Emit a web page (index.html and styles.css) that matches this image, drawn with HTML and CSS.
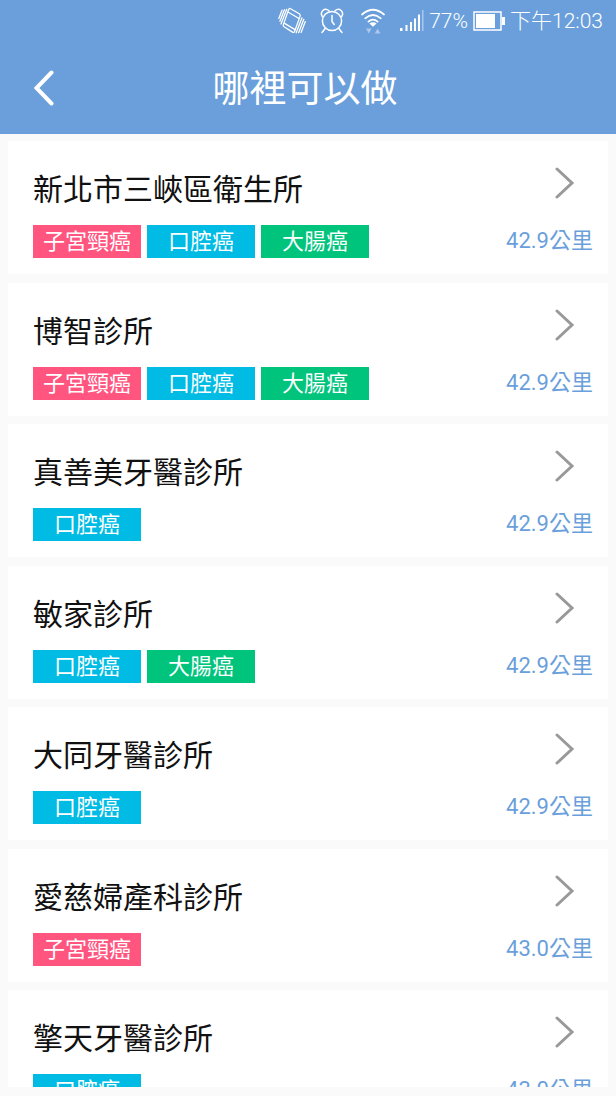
FILE: index.html
```html
<!DOCTYPE html>
<html lang="zh-Hant">
<head>
    <meta charset="UTF-8">
    <meta name="viewport" content="width=device-width, initial-scale=1.0">
    <title>哪裡可以做</title>
    <link rel="stylesheet" href="styles.css">
</head>
<body>
    <header class="top">
        <div class="status-bar">
            <svg class="icon-vibrate" width="28" height="28" viewBox="0 0 28 28">
                <g fill="none" stroke="#fff" stroke-width="1.3" stroke-linecap="round" stroke-linejoin="round">
                    <path d="M12.500 1.700L21.300 6.800q1.400.9.800 2.300L16.600 24.500q-.7 1.500-2.100.6L6 19.800q-1.200-.8-.6-2.200L10.600 2.500q.6-1.500 1.900-.8z"/>
                    <path d="M10.400 5.200l10.600 6.300M6.600 16.400l10.400 6.200"/>
                    <path d="M4 3.200L.8 11.500M6.400 2.700L1.900 14.200M8.700 2.300L3 16.900M24 10.800l-5.800 15M25.800 12.300l-5.200 13.400M27.300 14.600l-4.200 10.800"/>
                </g>
            </svg>
            <svg class="icon-alarm" width="24" height="26" viewBox="0 0 24 26">
                <g fill="none" stroke="#fff" stroke-width="1.5" stroke-linecap="round" stroke-linejoin="round">
                    <circle cx="12" cy="13" r="9.600"/>
                    <path d="M12 7.500v6l2.200 3M5.200 20.500L2 24.500M18.800 20.500l3.200 4"/>
                    <path d="M2.300 8.500C-.5 4 4.500-1 9 2.800M21.700 8.500C24.500 4 19.500-1 15 2.800"/>
                </g>
            </svg>
            <svg class="icon-wifi" width="24" height="26" viewBox="0 0 24 26">
                <g fill="none" stroke="#fff" stroke-width="1.700" stroke-linecap="round">
                    <path d="M1 6.500q11-9.500 22 0M4.200 10.300q7.800-6.600 15.600 0M7.400 13.600q4.600-3.800 9.200 0"/>
                </g>
                <path d="M12 18.800l-3.600-3.300q3.600-2.600 7.200 0z" fill="#fff"/>
                <path d="M5 20.500h5.600L7.800 25.500zM13.800 25.500h5.600l-2.800-5z" fill="#a9c8ec"/>
            </svg>
            <svg class="icon-signal" width="24" height="22" viewBox="0 0 24 22">
                <path d="M0 18h2.500v3H0zM5.500 15h2v6h-2zM10 12h2v9h-2zM14 8.500h2V21h-2zM18 4.500h2V21h-2z" fill="#fff"/>
                <path d="M22 0h1.500v21H22z" fill="#a9c8ec"/>
            </svg>
            <span class="percent">77%</span>
            <svg class="icon-battery" width="32" height="20" viewBox="0 0 32 20">
                <path d="M1 1h27v18H1z" fill="none" stroke="#fff" stroke-width="1.500"/>
                <path d="M3 3h19v14H3zM29 6h3v8h-3z" fill="#fff"/>
            </svg>
            <span class="time">下午12:03</span>
        </div>
        <div class="title-bar">
            <button type="button" class="back" aria-label="返回">
                <svg width="20" height="36" viewBox="0 0 20 36">
                    <path d="M17.500 2.500L2.500 18l15 15.500" fill="none" stroke="#fff" stroke-width="4" stroke-linecap="round"/>
                </svg>
            </button>
            <h1>哪裡可以做</h1>
        </div>
    </header>

    <main class="list">
        <a class="card" href="#">
            <div class="info">
                <h2>新北市三峽區衛生所</h2>
                <div class="tags">
                    <span class="tag pink">子宮頸癌</span>
                    <span class="tag blue">口腔癌</span>
                    <span class="tag green">大腸癌</span>
                </div>
            </div>
            <div class="side">
                <svg class="arrow" width="20" height="32" viewBox="0 0 20 32"><path d="M2 2l15 14L2 30"/></svg>
                <span class="distance">42.9公里</span>
            </div>
        </a>
        <a class="card" href="#">
            <div class="info">
                <h2>博智診所</h2>
                <div class="tags">
                    <span class="tag pink">子宮頸癌</span>
                    <span class="tag blue">口腔癌</span>
                    <span class="tag green">大腸癌</span>
                </div>
            </div>
            <div class="side">
                <svg class="arrow" width="20" height="32" viewBox="0 0 20 32"><path d="M2 2l15 14L2 30"/></svg>
                <span class="distance">42.9公里</span>
            </div>
        </a>
        <a class="card" href="#">
            <div class="info">
                <h2>真善美牙醫診所</h2>
                <div class="tags">
                    <span class="tag blue">口腔癌</span>
                </div>
            </div>
            <div class="side">
                <svg class="arrow" width="20" height="32" viewBox="0 0 20 32"><path d="M2 2l15 14L2 30"/></svg>
                <span class="distance">42.9公里</span>
            </div>
        </a>
        <a class="card" href="#">
            <div class="info">
                <h2>敏家診所</h2>
                <div class="tags">
                    <span class="tag blue">口腔癌</span>
                    <span class="tag green">大腸癌</span>
                </div>
            </div>
            <div class="side">
                <svg class="arrow" width="20" height="32" viewBox="0 0 20 32"><path d="M2 2l15 14L2 30"/></svg>
                <span class="distance">42.9公里</span>
            </div>
        </a>
        <a class="card" href="#">
            <div class="info">
                <h2>大同牙醫診所</h2>
                <div class="tags">
                    <span class="tag blue">口腔癌</span>
                </div>
            </div>
            <div class="side">
                <svg class="arrow" width="20" height="32" viewBox="0 0 20 32"><path d="M2 2l15 14L2 30"/></svg>
                <span class="distance">42.9公里</span>
            </div>
        </a>
        <a class="card" href="#">
            <div class="info">
                <h2>愛慈婦產科診所</h2>
                <div class="tags">
                    <span class="tag pink">子宮頸癌</span>
                </div>
            </div>
            <div class="side">
                <svg class="arrow" width="20" height="32" viewBox="0 0 20 32"><path d="M2 2l15 14L2 30"/></svg>
                <span class="distance">43.0公里</span>
            </div>
        </a>
        <a class="card" href="#">
            <div class="info">
                <h2>擎天牙醫診所</h2>
                <div class="tags">
                    <span class="tag blue">口腔癌</span>
                </div>
            </div>
            <div class="side">
                <svg class="arrow" width="20" height="32" viewBox="0 0 20 32"><path d="M2 2l15 14L2 30"/></svg>
                <span class="distance">43.0公里</span>
            </div>
        </a>
    </main>
</body>
</html>
```

FILE: styles.css
```css
* {
    box-sizing: border-box;
}
body {
    display: flex;
    flex-direction: column;
    height: 100vh;
    margin: 0;
    padding-bottom: 9px;
    background-color: #fafafa;
    font-family: Roboto, 'Noto Sans CJK TC', sans-serif;
}
h1, h2 {
    margin: 0;
    font-weight: 400;
}
.top {
    flex: none;
    background-color: #6a9fdb;
    color: #fff;
}
.status-bar {
    display: flex;
    justify-content: flex-end;
    align-items: center;
    height: 42px;
    padding-right: 13px;
    font-size: 21px;
    font-weight: 300;
    line-height: 42px;
}
.icon-vibrate {
    margin-right: 14px;
}
.icon-alarm {
    margin-right: 17px;
}
.icon-wifi {
    margin-right: 15px;
}
.icon-signal,
.percent,
.icon-battery {
    margin-right: 5px;
}
.title-bar {
    display: grid;
    grid-template-columns: 60px 1fr 66px;
    align-items: center;
    height: 92px;
}
.title-bar h1 {
    padding-top: 4px;
    font-size: 37px;
    line-height: 88px;
    text-align: center;
}
.back {
    display: flex;
    justify-content: flex-end;
    padding: 0 6px 0 0;
    border: none;
    background: none;
    cursor: pointer;
}
.list {
    flex: 1;
    min-height: 0;
    margin: 7px 8px 0;
    overflow-y: auto;
    scrollbar-width: none;
}
.card {
    display: flex;
    justify-content: space-between;
    height: 133px;
    margin-top: 9px;
    padding: 26px 15px 15px 25px;
    background-color: #fff;
    color: #111;
    text-decoration: none;
}
.card:nth-child(odd) {
    margin-top: 8px;
}
.card:first-child {
    margin-top: 0;
}
.card h2 {
    font-size: 30px;
    line-height: 46px;
}
.tags {
    display: flex;
    gap: 6px;
    margin-top: 12px;
}
.tag {
    width: 108px;
    height: 33px;
    color: #fff;
    font-size: 22px;
    line-height: 33px;
    text-align: center;
}
.pink {
    background-color: #ff557f;
}
.blue {
    background-color: #00bce4;
}
.green {
    background-color: #00c47c;
}
.side {
    display: flex;
    flex-direction: column;
    align-items: flex-end;
    justify-content: space-between;
}
.arrow {
    margin-right: 18px;
    fill: none;
    stroke: #999;
    stroke-width: 3;
    stroke-linecap: round;
}
.distance {
    color: #6a9fdb;
    font-size: 22px;
    line-height: 36px;
}
```
